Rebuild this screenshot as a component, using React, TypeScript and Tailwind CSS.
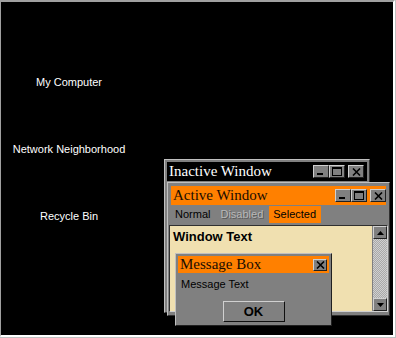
import React from 'react'

const sans = "font-['Liberation_Sans',Arial,sans-serif]"
const serif = "font-['Liberation_Serif','Times_New_Roman',serif]"

type Glyph = 'min' | 'max' | 'close' | 'up' | 'down'

function GlyphIcon({ kind }: { kind: Glyph }) {
  if (kind === 'min')
    return (
      <svg width="10" height="9" viewBox="0 0 10 9">
        <rect x="1" y="6" width="6" height="2" fill="#000" />
      </svg>
    )
  if (kind === 'max')
    return (
      <svg width="10" height="9" viewBox="0 0 10 9">
        <rect x="0.5" y="0.5" width="9" height="8" fill="none" stroke="#000" />
        <rect x="0.5" y="0.5" width="9" height="1.5" fill="#000" />
      </svg>
    )
  if (kind === 'close')
    return (
      <svg width="9" height="8" viewBox="0 0 9 8">
        <path d="M1 0.5 L8 7.5 M8 0.5 L1 7.5" stroke="#000" strokeWidth="1.6" />
      </svg>
    )
  if (kind === 'up')
    return (
      <svg width="7" height="4" viewBox="0 0 7 4">
        <path d="M3.5 0 L7 4 L0 4 Z" fill="#000" />
      </svg>
    )
  return (
    <svg width="7" height="4" viewBox="0 0 7 4">
      <path d="M0 0 L7 0 L3.5 4 Z" fill="#000" />
    </svg>
  )
}

function CapButton({ kind, className = '' }: { kind: Glyph; className?: string }) {
  return (
    <div
      className={`w-[16px] h-[13px] bg-[#808080] border border-t-[#d0d0d0] border-l-[#d0d0d0] border-b-[#202020] border-r-[#202020] flex items-center justify-center ${className}`}
    >
      <GlyphIcon kind={kind} />
    </div>
  )
}

function ScrollButton({ kind }: { kind: 'up' | 'down' }) {
  return (
    <div className="w-[14px] h-[13px] bg-[#808080] border border-t-[#d0d0d0] border-l-[#d0d0d0] border-b-[#202020] border-r-[#202020] flex items-center justify-center">
      <GlyphIcon kind={kind} />
    </div>
  )
}

function InactiveWindow() {
  return (
    <div className="absolute left-[163px] top-[157px] w-[206px] h-[154px] bg-[#808080] border border-t-[#c0c0c0] border-l-[#c0c0c0] border-b-[#303030] border-r-[#303030] p-[2px]">
      <div className="h-[19px] bg-black flex items-center justify-between pl-[2px] pr-[3px]">
        <span className={`${serif} text-[15px] text-white leading-none`}>Inactive Window</span>
        <div className="flex items-center">
          <CapButton kind="min" />
          <CapButton kind="max" />
          <CapButton kind="close" className="ml-[3px]" />
        </div>
      </div>
    </div>
  )
}

function ActiveWindow() {
  return (
    <div className="absolute left-[166px] top-[180px] w-[223px] h-[134px] bg-[#808080] border border-t-[#c0c0c0] border-l-[#c0c0c0] border-b-[#303030] border-r-[#303030] pt-[3px] px-[3px] pb-[3px] flex flex-col">
      <div className="h-[19px] shrink-0 bg-[#ff8000] flex items-center justify-between pl-[2px]">
        <span className={`${serif} text-[15px] text-[#1a0d00] leading-none`}>Active Window</span>
        <div className="flex items-center">
          <CapButton kind="min" />
          <CapButton kind="max" />
          <CapButton kind="close" className="ml-[3px]" />
        </div>
      </div>

      <div className={`${sans} h-[19px] shrink-0 flex items-stretch text-[11px] leading-none pt-[1px] pb-[1px]`}>
        <span className="px-[4px] flex items-center text-black">Normal</span>
        <span className="px-[4px] ml-[2px] flex items-center text-[#b8b8b8] [text-shadow:1px_1px_0_#5a5a5a]">
          Disabled
        </span>
        <span className="px-[4px] ml-[2px] w-[52px] flex items-center bg-[#ff8000] text-black">Selected</span>
      </div>

      <div className="flex-1 mt-[1px] -mx-[2px] border border-t-[#303030] border-l-[#303030] border-b-[#d0d0d0] border-r-[#d0d0d0] bg-[#f0e0b0] flex">
        <div className="flex-1 pl-[3px] pt-[4px]">
          <div className={`${sans} font-bold text-[13px] text-black leading-none`}>Window Text</div>
        </div>
        <div className="w-[15px] flex flex-col bg-[repeating-conic-gradient(#d0d0d0_0_25%,#a8a8a8_0_50%)] bg-[length:2px_2px] border-l border-[#808080]">
          <ScrollButton kind="up" />
          <div className="flex-1" />
          <ScrollButton kind="down" />
        </div>
      </div>
    </div>
  )
}

function MessageBox() {
  return (
    <div className="absolute left-[174px] top-[251px] w-[157px] h-[73px] bg-[#808080] border border-t-[#c0c0c0] border-l-[#c0c0c0] border-b-[#202020] border-r-[#202020] p-[2px] flex flex-col">
      <div className="h-[17px] shrink-0 bg-[#ff8000] flex items-center justify-between pl-[2px] pr-[2px]">
        <span className={`${serif} text-[15px] text-[#1a0d00] leading-none`}>Message Box</span>
        <div className="w-[14px] h-[12px] bg-[#808080] border border-t-[#d0d0d0] border-l-[#d0d0d0] border-b-[#202020] border-r-[#202020] flex items-center justify-center">
          <GlyphIcon kind="close" />
        </div>
      </div>
      <div className={`${sans} text-[11px] text-black leading-none pl-[3px] pt-[6px]`}>Message Text</div>
      <div className="flex justify-center mt-[11px]">
        <button
          className={`${sans} w-[62px] h-[21px] bg-[#808080] border border-t-[#d0d0d0] border-l-[#d0d0d0] border-b-[#101010] border-r-[#101010] font-bold text-[13px] text-black leading-none flex items-center justify-center`}
        >
          OK
        </button>
      </div>
    </div>
  )
}

const desktopItems = ['My Computer', 'Network Neighborhood', 'Recycle Bin']

export default function App() {
  return (
    <div className="w-[396px] h-[338px] bg-[#c0c0c0]">
      <div className="relative w-[395px] h-[337px] bg-black border-t-2 border-l border-b-2 border-r-2 border-t-[#a0a0a0] border-l-[#a0a0a0] border-b-white border-r-white overflow-hidden">
        <div className={`${sans} absolute left-0 top-[73px] w-[136px] flex flex-col text-[11px] text-white`}>
          {desktopItems.map((label) => (
            <div key={label} className="h-[67px] text-center leading-[14px]">
              {label}
            </div>
          ))}
        </div>

        <InactiveWindow />
        <ActiveWindow />
        <MessageBox />
      </div>
    </div>
  )
}
